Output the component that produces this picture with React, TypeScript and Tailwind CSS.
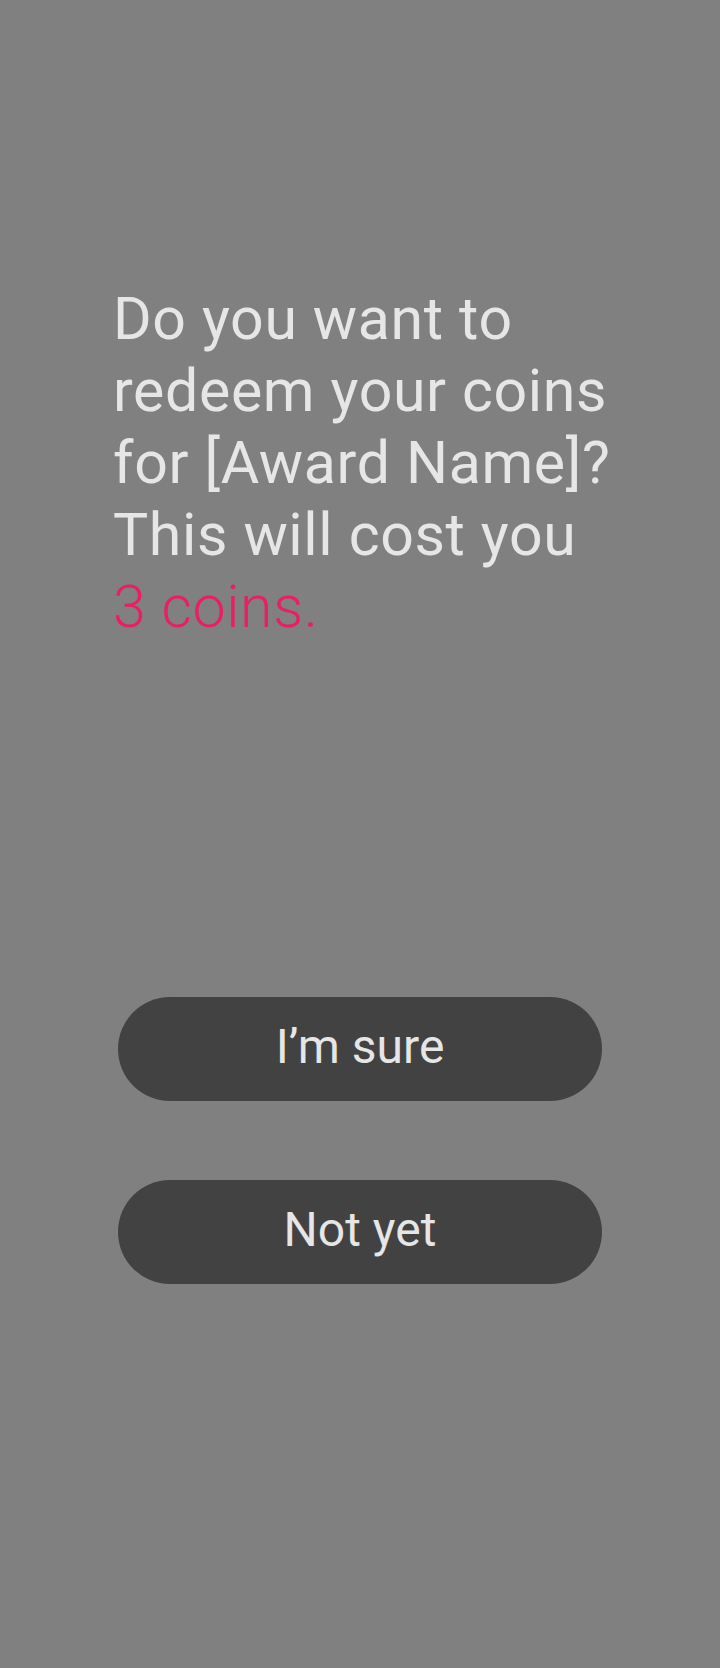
export default function App() {
  return (
    <div className="min-h-[1668px] w-full bg-[#808080] font-['Roboto',sans-serif] flex flex-col">
      {/* Prompt */}
      <div className="pt-[283px] pl-[113px] pr-[30px]">
        <p className="text-[59px] leading-[72px] tracking-[0.65px] text-[#e6e6e6] font-normal">
          Do you want to
          <br />
          redeem your coins
          <br />
          for [Award Name]?
          <br />
          This will cost you
          <br />
          <span className="font-light text-[#e91e63]">3 coins.</span>
        </p>
      </div>

      {/* Actions */}
      <div className="mt-[354px] flex flex-col items-center gap-[79px] pl-[118px] pr-[118px]">
        <button className="h-[104px] w-full rounded-full bg-[#424242] text-[48px] text-[#e6e6e6] pb-[4px]">
          I’m sure
        </button>
        <button className="h-[104px] w-full rounded-full bg-[#424242] text-[48px] text-[#e6e6e6] pb-[4px]">
          Not yet
        </button>
      </div>
    </div>
  );
}
